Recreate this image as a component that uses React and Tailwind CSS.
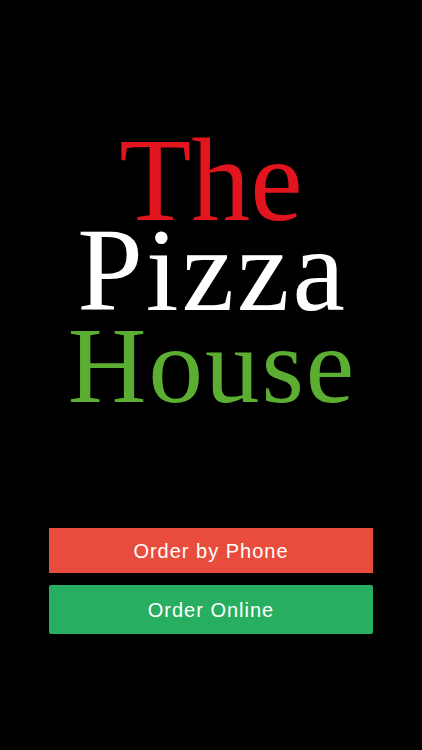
import React from "react";

function App() {
  return (
    <div className="w-[422px] h-[750px] bg-black flex flex-col items-center">
      <div className="mt-[136px] flex flex-col items-center font-['Liberation_Serif',serif]">
        <span className="text-[#e2151f] text-[118px] leading-[90px]">The</span>
        <span className="text-white text-[118px] leading-[90px] tracking-[3px] pl-[3px]">Pizza</span>
        <span className="text-[#5cae32] text-[109px] leading-[99px] tracking-[2px] pl-[2px]">House</span>
      </div>
      <div className="mt-[113px] w-[324px] flex flex-col gap-[12px] font-['Liberation_Sans',sans-serif] text-[20px] text-white tracking-[1px]">
        <button className="h-[45px] bg-[#e74c3c]">Order by Phone</button>
        <button className="h-[49px] bg-[#27ae60] rounded-[2px]">Order Online</button>
      </div>
    </div>
  );
}

export default App;
